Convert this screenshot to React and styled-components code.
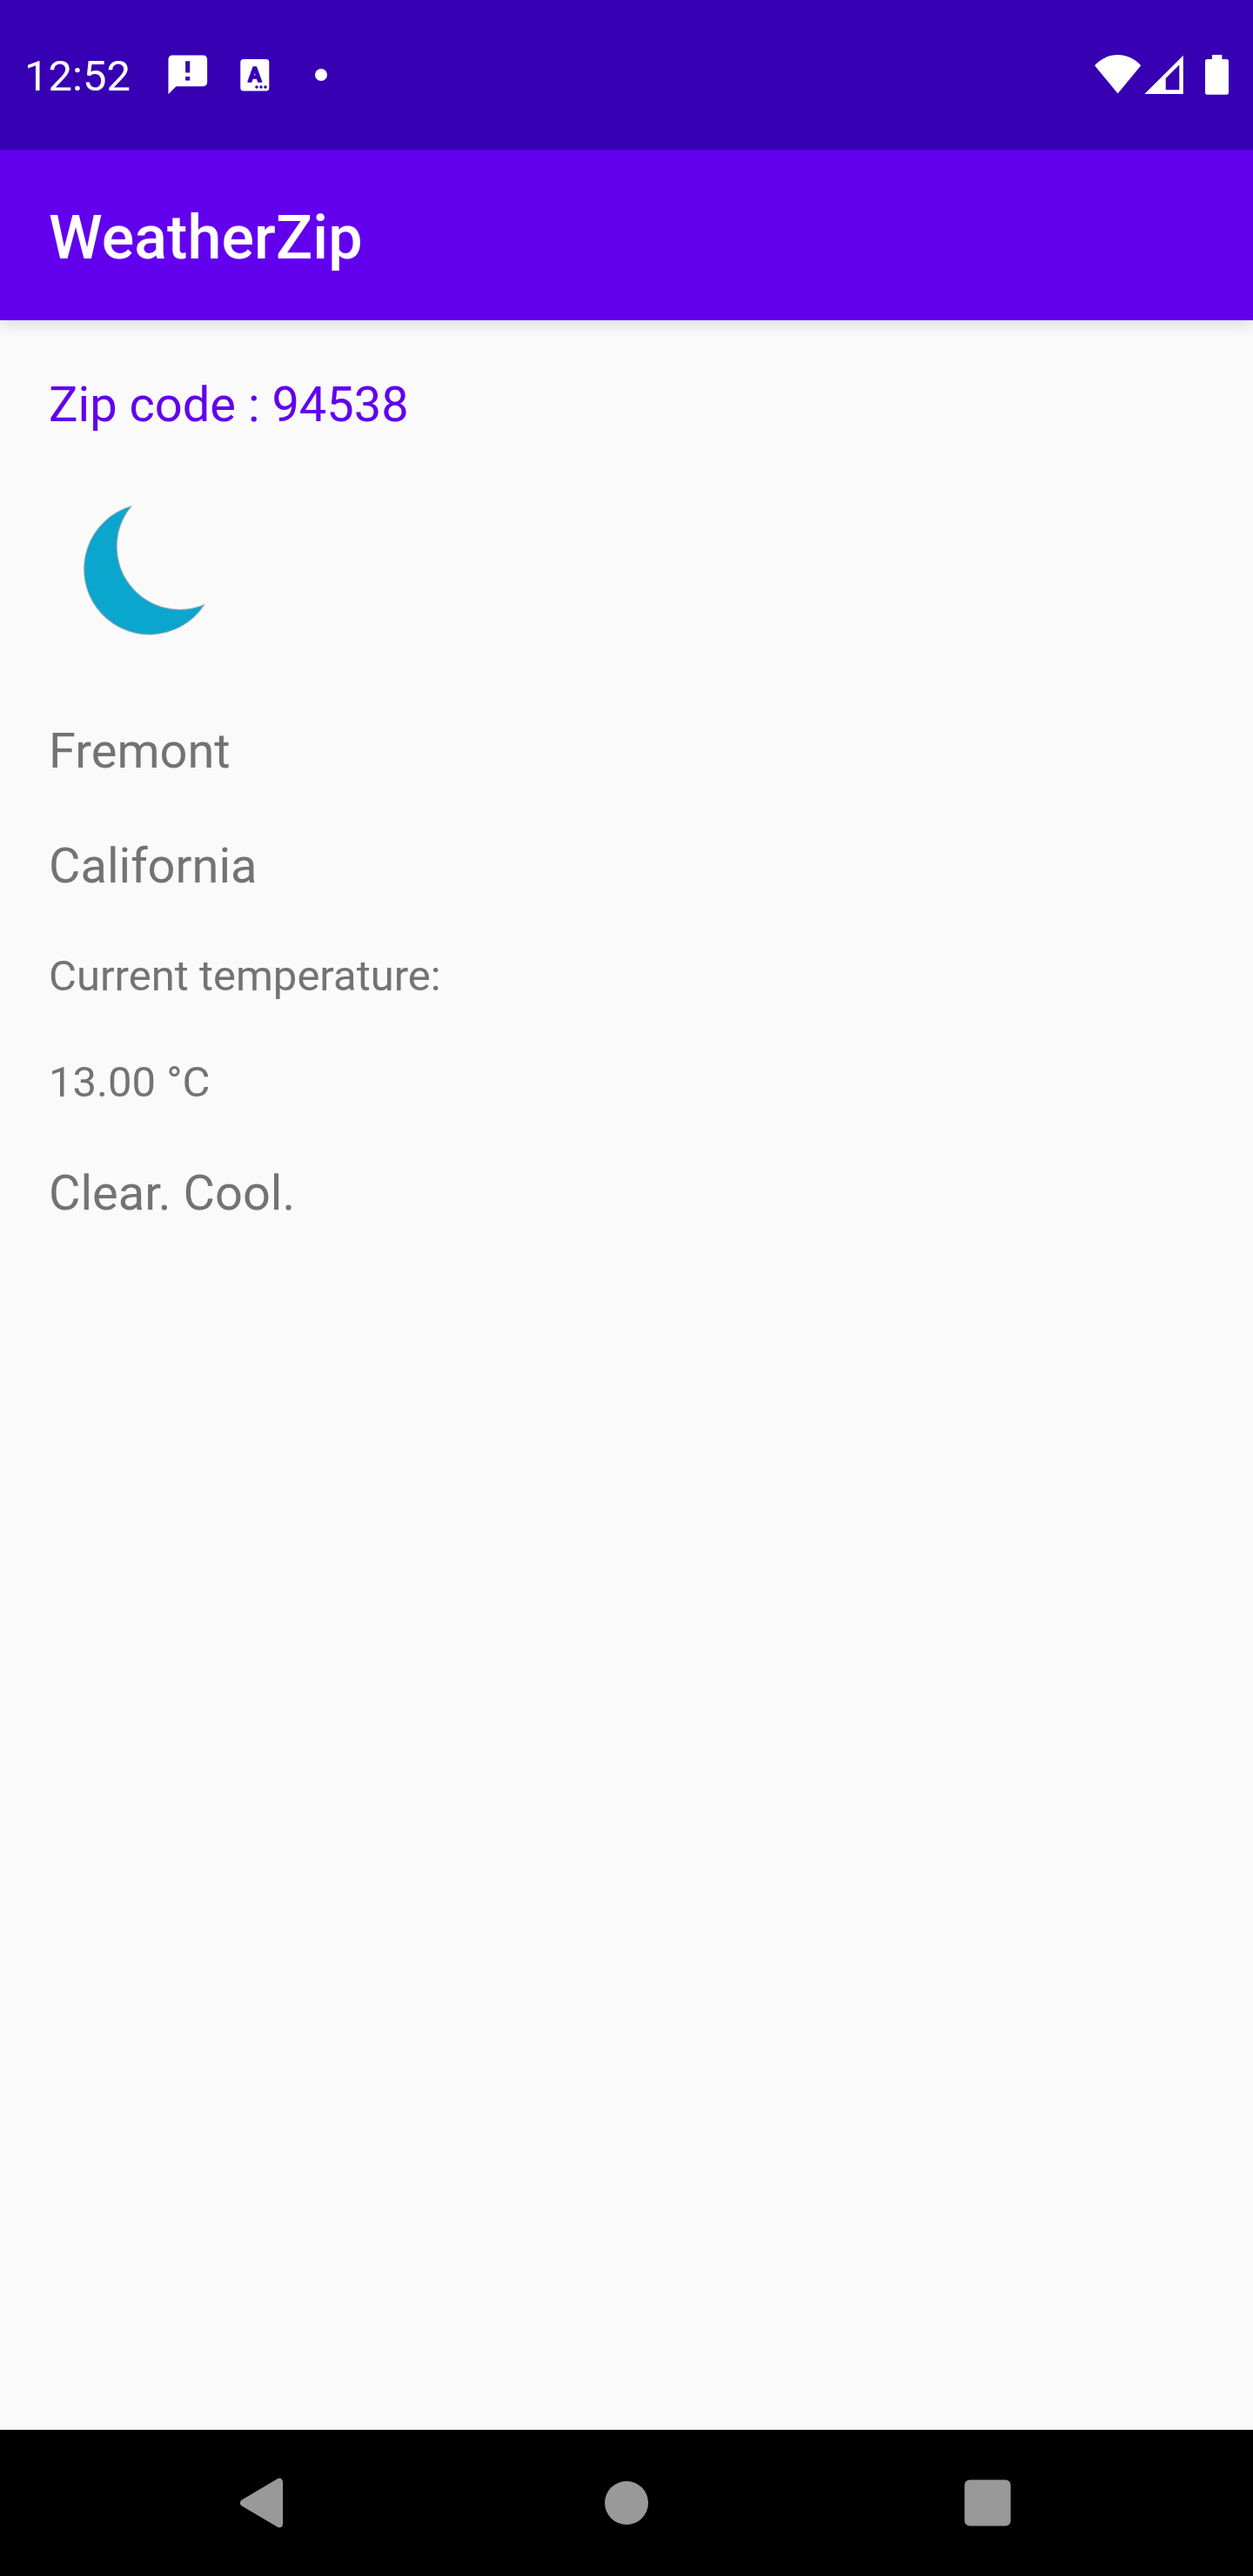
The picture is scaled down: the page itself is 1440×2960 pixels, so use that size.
import React from "react";
import styled, { createGlobalStyle } from "styled-components";

const GlobalStyle = createGlobalStyle`
  body {
    margin: 0;
    background: #fafafa;
    font-family: Roboto, "Noto Sans", sans-serif;
  }
`;

const Screen = styled.div`
  display: flex;
  flex-direction: column;
  width: 1440px;
  height: 2960px;
  overflow: hidden;
  background: #fafafa;
`;

const StatusBar = styled.header`
  flex: none;
  z-index: 1;
  display: flex;
  align-items: center;
  justify-content: space-between;
  box-sizing: border-box;
  height: 172px;
  padding: 0 28px;
  background: #3700b3;
  color: #fff;
`;

const StatusGroup = styled.div`
  display: flex;
  align-items: center;
`;

const Clock = styled.time`
  width: 160px;
  font-size: 49px;
  line-height: 58px;
  padding-top: 4px;
`;

const Icon = styled.svg`
  display: block;
  flex: none;
  width: ${(p) => p.$w}px;
  height: ${(p) => p.$h}px;
  margin-left: ${(p) => p.$gap || 0}px;
`;

const MoonIcon = styled(Icon)`
  filter: blur(0.7px);
`;

const IconLetter = styled.text`
  font: 700 23px Roboto, sans-serif;
  text-anchor: middle;
  fill: #3700b3;
  stroke: #3700b3;
  stroke-width: 1.6px;
  stroke-linejoin: round;
`;

const AppBar = styled.div`
  flex: none;
  display: flex;
  align-items: center;
  box-sizing: border-box;
  height: 196px;
  padding: 6px 56px 0;
  background: #6200ee;
  color: #fff;
  box-shadow: 0 4px 18px rgba(0, 0, 0, 0.14);
`;

const Title = styled.h1`
  margin: 0;
  font-size: 70px;
  font-weight: 500;
  line-height: 82px;
  letter-spacing: 0.1px;
`;

const Content = styled.main`
  flex: 1;
  display: flex;
  flex-direction: column;
  align-items: flex-start;
  gap: 56px;
  padding: 59px 56px 0;
`;

const Line = styled.p`
  margin: 0;
  font-size: ${(p) => (p.$small ? 49 : 56)}px;
  line-height: ${(p) => (p.$small ? 66 : 76)}px;
  color: ${(p) => (p.$accent ? "#6200ee" : "#737373")};
  white-space: nowrap;
`;

const NavBar = styled.nav`
  flex: none;
  display: flex;
  align-items: center;
  justify-content: center;
  gap: 355px;
  height: 168px;
  background: #000;
`;

const NavButton = styled.button`
  display: flex;
  align-items: center;
  justify-content: center;
  width: 60px;
  height: 60px;
  padding: 0;
  border: 0;
  background: none;
`;

export default function App() {
  return (
    <>
      <GlobalStyle />
      <Screen>
        <StatusBar>
          <StatusGroup>
            <Clock>12:52</Clock>
            <Icon $w={53.6} $h={53.6} $gap={0.6} viewBox="0 0 24 24" fill="#fff">
              <path d="M20 2H4c-1.1 0-2 .9-2 2v18l4-4h14c1.1 0 2-.9 2-2V4c0-1.1-.9-2-2-2zM13.1 11h-2.3V5h2.3v6zm0 4h-2.3v-2h2.3v2z" />
            </Icon>
            <Icon $w={34} $h={38} $gap={33.4} viewBox="0 0 34 38">
              <rect x="0.3" y="1" width="33" height="36.5" rx="3.5" fill="#fff" />
              <IconLetter x="16.8" y="27">A</IconLetter>
              <g fill="#3700b3">
                <circle cx="19" cy="33" r="1.8" />
                <circle cx="24" cy="33" r="1.8" />
                <circle cx="29" cy="33" r="1.8" />
              </g>
            </Icon>
            <Icon $w={14} $h={14} $gap={52.4} viewBox="0 0 14 14" fill="#fff">
              <circle cx="7" cy="7" r="7" />
            </Icon>
          </StatusGroup>
          <StatusGroup>
            <Icon $w={54} $h={46} viewBox="0 0 54 46" fill="#fff">
              <path d="M0 12.2C15-4 38-4 53.2 12.2L26.6 44.6Z" />
            </Icon>
            <Icon $w={45} $h={46} $gap={3} viewBox="0 0 45 46" fill="#fff" fillRule="evenodd">
              <path d="M0.3 45L44.8 0.8V45ZM24.7 27V40.3H40.3V11.4Z" />
            </Icon>
            <Icon $w={27} $h={46} $gap={25} viewBox="0 0 27 46" fill="#fff">
              <path d="M8 0H19.4V5H24.5Q27 5 27 7.5V43.3Q27 45.8 24.5 45.8H2.5Q0 45.8 0 43.3V7.5Q0 5 2.5 5H8Z" />
            </Icon>
          </StatusGroup>
        </StatusBar>
        <AppBar>
          <Title>WeatherZip</Title>
        </AppBar>
        <Content>
          <Line $accent>Zip code : 94538</Line>
          <MoonIcon $w={210} $h={210} viewBox="56 559 210 210">
            <path
              d="M150.5 582A75 75 0 1 0 234.3 695.3A72.7 72.7 0 0 1 150.5 582Z"
              fill="#0aa6ce"
              stroke="#7b9aa5"
              strokeOpacity="0.6"
              strokeWidth="1.5"
            />
          </MoonIcon>
          <Line>Fremont</Line>
          <Line>California</Line>
          <Line $small>Current temperature:</Line>
          <Line $small>13.00 °C</Line>
          <Line>Clear. Cool.</Line>
        </Content>
        <NavBar>
          <NavButton aria-label="Back">
            <Icon $w={60} $h={60} viewBox="0 0 60 60">
              <path
                d="M5 30L46 5.7V54.3Z"
                fill="#999"
                stroke="#999"
                strokeWidth="8"
                strokeLinejoin="round"
              />
            </Icon>
          </NavButton>
          <NavButton aria-label="Home">
            <Icon $w={60} $h={60} viewBox="0 0 60 60">
              <circle cx="30" cy="30" r="25" fill="#999" />
            </Icon>
          </NavButton>
          <NavButton aria-label="Overview">
            <Icon $w={60} $h={60} viewBox="0 0 60 60">
              <rect x="3.5" y="3.5" width="53" height="53" rx="6" fill="#999" />
            </Icon>
          </NavButton>
        </NavBar>
      </Screen>
    </>
  );
}
